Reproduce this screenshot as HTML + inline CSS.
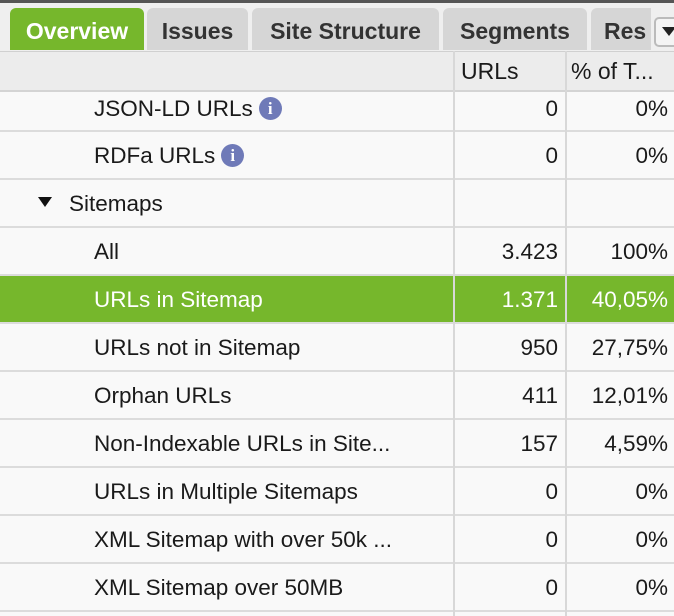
<!DOCTYPE html>
<html><head><style>
body{margin:0;width:674px;height:616px;overflow:hidden;background:#f9f9f9;font-family:"Liberation Sans",sans-serif;color:#1a1a1a;position:relative}
.top{position:absolute;left:0;top:0;width:674px;height:3px;background:#555}
.strip{position:absolute;left:0;top:3px;width:674px;height:48px;background:#efefef}
.tab{position:absolute;top:8px;height:42px;background:#d6d6d6;border-radius:6px 6px 0 0;font-weight:bold;font-size:23px;color:#333;line-height:46px;text-align:center;overflow:hidden;white-space:nowrap}
.dd{position:absolute;left:654px;top:17px;width:30px;height:26px;border:2px solid #bbb;border-radius:5px;background:#f4f4f4}
.hdr{position:absolute;left:0;top:51px;width:674px;height:38px;background:#ececec;border-top:1px solid #d0d0d0;border-bottom:2px solid #d4d4d4}
.row{position:absolute;left:0;width:674px;height:46px;border-bottom:2px solid #dcdcdc;font-size:22.5px;line-height:48px}
.vl{position:absolute;top:51px;width:2px;height:565px;background:#d8d8d8}
.c1{position:absolute;white-space:nowrap}
.n{position:absolute;right:116px;text-align:right}
.p{position:absolute;right:6px;text-align:right}
.g{background:#76b72c;color:#fff}
.i{display:inline-block;width:23px;height:23px;border-radius:50%;background:#6f7ab8;color:#fff;font-weight:bold;font-size:17px;line-height:23px;text-align:center;font-family:"Liberation Serif",serif;vertical-align:2px;margin-left:6px}
</style></head><body>
<div class="top"></div><div class="strip"></div>
<div class="tab" style="left:10px;width:134px;background:#76b72c;color:#fff">Overview</div>
<div class="tab" style="left:147px;width:101px">Issues</div>
<div class="tab" style="left:252px;width:187px">Site Structure</div>
<div class="tab" style="left:443px;width:144px">Segments</div>
<div class="tab" style="left:591px;width:60px;border-radius:6px 0 0 0;text-align:left;padding-left:13px;box-sizing:border-box">Res</div>
<div class="dd"><span style="position:absolute;left:6px;top:8px;border-left:7px solid transparent;border-right:7px solid transparent;border-top:9px solid #222"></span></div>
<div class="hdr"><span style="position:absolute;left:461px;top:6px;font-size:23px">URLs</span><span style="position:absolute;left:571px;top:6px;font-size:23px">% of T...</span></div>
<div class="row" style="top:90px;height:40px;line-height:38px"><span class="c1" style="left:94px">JSON-LD URLs<span class="i">i</span></span><span class="n">0</span><span class="p">0%</span></div>
<div class="row" style="top:132px"><span class="c1" style="left:94px">RDFa URLs<span class="i">i</span></span><span class="n">0</span><span class="p">0%</span></div>
<div class="row" style="top:180px"><span class="c1" style="left:38px"><span style="display:inline-block;border-left:7px solid transparent;border-right:7px solid transparent;border-top:10px solid #111;vertical-align:4px;margin-right:17px"></span>Sitemaps</span></div>
<div class="row" style="top:228px"><span class="c1" style="left:94px">All</span><span class="n">3.423</span><span class="p">100%</span></div>
<div class="row g" style="top:276px"><span class="c1" style="left:94px">URLs in Sitemap</span><span class="n">1.371</span><span class="p">40,05%</span></div>
<div class="row" style="top:324px"><span class="c1" style="left:94px">URLs not in Sitemap</span><span class="n">950</span><span class="p">27,75%</span></div>
<div class="row" style="top:372px"><span class="c1" style="left:94px">Orphan URLs</span><span class="n">411</span><span class="p">12,01%</span></div>
<div class="row" style="top:420px"><span class="c1" style="left:94px">Non-Indexable URLs in Site...</span><span class="n">157</span><span class="p">4,59%</span></div>
<div class="row" style="top:468px"><span class="c1" style="left:94px">URLs in Multiple Sitemaps</span><span class="n">0</span><span class="p">0%</span></div>
<div class="row" style="top:516px"><span class="c1" style="left:94px">XML Sitemap with over 50k ...</span><span class="n">0</span><span class="p">0%</span></div>
<div class="row" style="top:564px"><span class="c1" style="left:94px">XML Sitemap over 50MB</span><span class="n">0</span><span class="p">0%</span></div>
<div class="vl" style="left:453px"></div><div class="vl" style="left:565px"></div>
</body></html>
